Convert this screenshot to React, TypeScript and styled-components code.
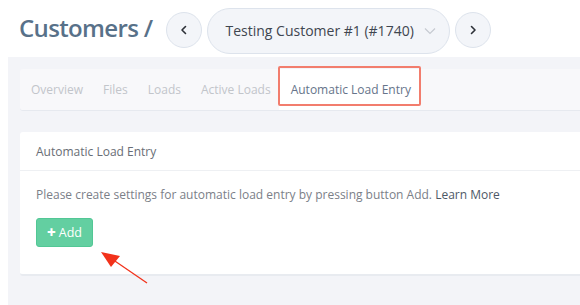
import React from "react";
import styled, { createGlobalStyle } from "styled-components";

const Global = createGlobalStyle`
  html, body { margin: 0; padding: 0; background: #ffffff; }
  body { font-family: "Open Sans", "Noto Sans", sans-serif; }
  * { box-sizing: border-box; }
`;

const Page = styled.div`
  position: relative;
  width: 580px;
  height: 305px;
  overflow: hidden;
  background: #fff;
`;

const Header = styled.div`
  height: 57px;
  display: flex;
  align-items: center;
  padding-left: 19px;
`;

const Title = styled.h1`
  margin: 0 13px 2px 0;
  font-size: 24px;
  font-weight: 600;
  color: #587189;
  letter-spacing: -0.65px;
  white-space: nowrap;
`;

const RoundBtn = styled.button`
  width: 36px;
  height: 36px;
  border-radius: 50%;
  border: 1px solid #dde3ec;
  background: #f3f5f9;
  display: flex;
  align-items: center;
  justify-content: center;
  padding: 0;
  margin-top: 2px;
  color: #333;
  flex: none;
`;

const Select = styled.div`
  margin: 4px 5px 0 5px;
  width: 243px;
  height: 46px;
  border-radius: 23px;
  border: 1px solid #dde3ec;
  background: #f3f5f9;
  display: flex;
  align-items: center;
  padding: 0 12px 0 18px;
  font-size: 14px;
  color: #3f4650;
  flex: none;
`;

const SelectText = styled.span`
  flex: 1;
  white-space: nowrap;
`;

const Body = styled.div`
  margin-left: 8px;
  height: 248px;
  background: #f3f4f8;
  padding: 12px 0 0 12px;
`;

const TabBar = styled.div`
  height: 42px;
  background: #f8f8fa;
  border-radius: 3px 0 0 3px;
  border-bottom: 1px solid #e6e9ef;
  display: flex;
  align-items: stretch;
  padding-left: 1px;
`;

const Tab = styled.div<{ $active?: boolean }>`
  display: flex;
  align-items: center;
  padding: ${(p) => (p.$active ? "0 9px 0 12px" : "0 10px")};
  font-size: 12px;
  color: ${(p) => (p.$active ? "#66748a" : "#c2c5ca")};
  background: ${(p) => (p.$active ? "#ffffff" : "transparent")};
  position: relative;
  margin-left: ${(p) => (p.$active ? "-2px" : "0")};
  white-space: nowrap;
`;

const Highlight = styled.div`
  position: absolute;
  left: -1px;
  right: -1px;
  top: -3px;
  bottom: 4px;
  border: 2px solid #f27d6d;
  border-radius: 2px;
  pointer-events: none;
`;

const Card = styled.div`
  margin-top: 21px;
  background: #fff;
  border-radius: 3px 0 0 3px;
  border-bottom: 2px solid #e8ebf0;
`;

const CardHeader = styled.div`
  height: 39px;
  display: flex;
  align-items: center;
  padding-left: 16px;
  font-size: 12px;
  color: #686d75;
  border-bottom: 1px solid #eef0f3;
`;

const CardBody = styled.div`
  padding: 16px 16px 27px;
`;

const Text = styled.p`
  margin: 0 0 15px;
  font-size: 12px;
  line-height: 16px;
  color: #7b8088;
  white-space: nowrap;
`;

const Link = styled.a`
  color: #4e5866;
  text-decoration: none;
`;

const AddButton = styled.button`
  width: 57px;
  height: 29px;
  border-radius: 3px;
  border: 1px solid #52c795;
  background: #63cfa1;
  color: #fff;
  font-family: inherit;
  font-size: 12.5px;
  display: flex;
  align-items: center;
  justify-content: center;
  gap: 3px;
  padding: 0;
`;

const Plus = styled.span`
  font-weight: 800;
  font-size: 15px;
  line-height: 1;
  margin-top: -1px;
`;

const Arrow = styled.svg`
  position: absolute;
  left: 95px;
  top: 245px;
  overflow: visible;
`;

const ChevronLeft = () => (
  <svg width="12" height="12" viewBox="0 0 12 12">
    <path d="M7.5 2.5 L4 6 L7.5 9.5" fill="none" stroke="#2d3138" strokeWidth="1.6" strokeLinecap="round" strokeLinejoin="round" />
  </svg>
);
const ChevronRight = () => (
  <svg width="12" height="12" viewBox="0 0 12 12">
    <path d="M4.5 2.5 L8 6 L4.5 9.5" fill="none" stroke="#2d3138" strokeWidth="1.6" strokeLinecap="round" strokeLinejoin="round" />
  </svg>
);
const ChevronDown = () => (
  <svg width="14" height="10" viewBox="0 0 14 10">
    <path d="M2 2.5 L7 7.5 L12 2.5" fill="none" stroke="#c6cad1" strokeWidth="1.2" />
  </svg>
);

export default function App() {
  const tabs = ["Overview", "Files", "Loads", "Active Loads"];
  return (
    <Page>
      <Global />
      <Header>
        <Title>Customers /</Title>
        <RoundBtn aria-label="Previous"><ChevronLeft /></RoundBtn>
        <Select>
          <SelectText>Testing Customer #1 (#1740)</SelectText>
          <ChevronDown />
        </Select>
        <RoundBtn aria-label="Next"><ChevronRight /></RoundBtn>
      </Header>
      <Body>
        <TabBar>
          {tabs.map((t) => (
            <Tab key={t}>{t}</Tab>
          ))}
          <Tab $active>
            Automatic Load Entry
            <Highlight />
          </Tab>
        </TabBar>
        <Card>
          <CardHeader>Automatic Load Entry</CardHeader>
          <CardBody>
            <Text>
              Please create settings for automatic load entry by pressing button Add. <Link href="#">Learn More</Link>
            </Text>
            <AddButton>
              <Plus>+</Plus>Add
            </AddButton>
          </CardBody>
        </Card>
      </Body>
      <Arrow width="60" height="45" viewBox="0 0 60 45">
        <line x1="52" y1="38" x2="14" y2="12" stroke="#f2321b" strokeWidth="1.3" />
        <polygon points="6,7 25,11 16,22" fill="#f2321b" />
      </Arrow>
    </Page>
  );
}
